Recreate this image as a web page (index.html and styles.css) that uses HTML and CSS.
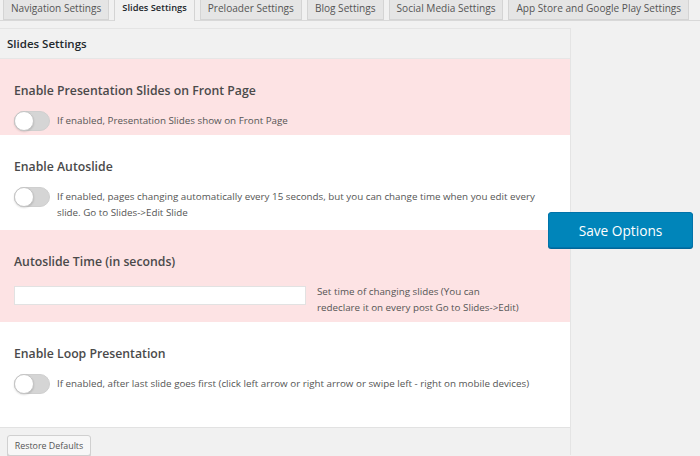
FILE: index.html
```html
<!DOCTYPE html>
<html>
<head>
<meta charset="utf-8">
<link rel="stylesheet" href="styles.css">
</head>
<body>
<nav class="tabs">
  <a class="tab">Navigation Settings</a>
  <a class="tab tab-active">Slides Settings</a>
  <a class="tab">Preloader Settings</a>
  <a class="tab">Blog Settings</a>
  <a class="tab">Social Media Settings</a>
  <a class="tab">App Store and Google Play Settings</a>
</nav>
<div class="main">
  <div class="panel">
    <div class="panel-head">Slides Settings</div>
    <div class="section pink s1">
      <h3 class="label">Enable Presentation Slides on Front Page</h3>
      <div class="row">
        <span class="toggle"></span>
        <p class="desc">If enabled, Presentation Slides show on Front Page</p>
      </div>
    </div>
    <div class="section s2">
      <h3 class="label">Enable Autoslide</h3>
      <div class="row">
        <span class="toggle"></span>
        <p class="desc desc-wide">If enabled, pages changing automatically every 15 seconds, but you can change time when you edit every slide. Go to Slides-&gt;Edit Slide</p>
      </div>
    </div>
    <div class="section pink s3">
      <h3 class="label label-input">Autoslide Time (in seconds)</h3>
      <div class="row">
        <input class="text-input" type="text">
        <p class="desc desc-narrow">Set time of changing slides (You can redeclare it on every post Go to Slides-&gt;Edit)</p>
      </div>
    </div>
    <div class="section s4">
      <h3 class="label">Enable Loop Presentation</h3>
      <div class="row">
        <span class="toggle"></span>
        <p class="desc">If enabled, after last slide goes first (click left arrow or right arrow or swipe left - right on mobile devices)</p>
      </div>
    </div>
    <div class="panel-foot">
      <button class="btn-restore">Restore Defaults</button>
    </div>
  </div>
  <div class="sidebar"></div>
  <button class="btn-save">Save Options</button>
</div>
</body>
</html>
```
FILE: styles.css
```css
html, body {
  margin: 0;
  padding: 0;
  height: 456px;
  overflow: hidden;
}
body {
  background: #f1f1f1;
  font-family: "Open Sans", "Noto Sans", sans-serif;
  color: #444;
}
.tabs {
  display: flex;
  gap: 5px;
  height: 20px;
  padding-left: 3px;
  border-bottom: 1px solid #d8d8d8;
  white-space: nowrap;
}
.tab {
  display: block;
  flex: none;
  height: 20px;
  box-sizing: border-box;
  padding: 0 7px;
  background: #e5e5e5;
  border: 1px solid #d4d4d4;
  border-top: none;
  font-size: 10.1px;
  line-height: 16px;
  color: #555;
}
.tab-active {
  background: #f1f1f1;
  height: 21px;
  border-bottom: none;
  color: #23282d;
  font-weight: 600;
  font-size: 9.3px;
}
.main {
  position: relative;
  display: grid;
  grid-template-columns: 571px 1fr;
  margin-top: 7px;
}
.panel {
  border-top: 1px solid #e4e4e4;
  border-right: 1px solid #e4e4e4;
}
.panel-head {
  height: 29px;
  line-height: 30px;
  padding-left: 7px;
  border-bottom: 1px solid #e6e6e6;
  font-size: 11.5px;
  font-weight: 600;
  color: #23282d;
}
.section {
  background: #fff;
  padding: 22px 14px 0;
}
.pink {
  background: #fde3e4;
}
.s1 { padding-bottom: 4px; }
.s2 { padding-bottom: 9px; }
.s3 { padding-bottom: 6px; }
.s4 { padding-bottom: 33px; }
.label {
  margin: 0 0 10px;
  font-size: 12.25px;
  line-height: 20px;
  font-weight: 600;
  color: #4a4a4a;
}
.label-input {
  margin-bottom: 12px;
}
.row {
  display: flex;
  align-items: flex-start;
}
.toggle {
  position: relative;
  flex: none;
  width: 36px;
  height: 20px;
  box-sizing: border-box;
  border-radius: 10px;
  background: #d5d5d5;
  border: 1px solid #cfcfcf;
}
.toggle::before {
  content: "";
  position: absolute;
  left: -1px;
  top: -1px;
  width: 20px;
  height: 20px;
  box-sizing: border-box;
  border-radius: 50%;
  background: #fff;
  border: 1px solid #c4c4c4;
  box-shadow: 0 1px 2px rgba(0,0,0,0.15);
}
.desc {
  margin: 0 0 0 7px;
  padding-top: 2px;
  font-size: 9.8px;
  line-height: 16px;
  color: #555;
}
.desc-wide {
  max-width: 488px;
}
.text-input {
  flex: none;
  width: 292px;
  height: 19px;
  box-sizing: border-box;
  margin: 2px 0 0;
  padding: 0 4px;
  background: #fff;
  border: 1px solid #e2e2e2;
  outline: none;
}
.desc-narrow {
  margin-left: 11px;
  padding-top: 0;
  width: 206px;
}
.panel-foot {
  height: 28px;
  border-top: 1px solid #e2e2e2;
  background: #f1f1f1;
  padding: 7px 0 0 7px;
  box-sizing: border-box;
}
.btn-restore {
  display: block;
  height: 21px;
  width: 84px;
  padding: 0;
  background: #f7f7f7;
  border: 1px solid #d0d0d0;
  border-radius: 3px;
  font-family: "Open Sans", "Noto Sans", sans-serif;
  font-size: 8.9px;
  line-height: 19px;
  color: #555;
  box-shadow: 0 1px 0 #ccc;
}
.sidebar {
  background: #f1f1f1;
}
.btn-save {
  position: absolute;
  left: 548px;
  top: 184px;
  width: 145px;
  height: 36px;
  background: #0085ba;
  border: 1px solid #0073aa;
  border-radius: 3px;
  box-shadow: 0 1px 0 #006799;
  font-family: "Open Sans", "Noto Sans", sans-serif;
  font-size: 13.7px;
  color: #fff;
  padding: 0;
}
```
